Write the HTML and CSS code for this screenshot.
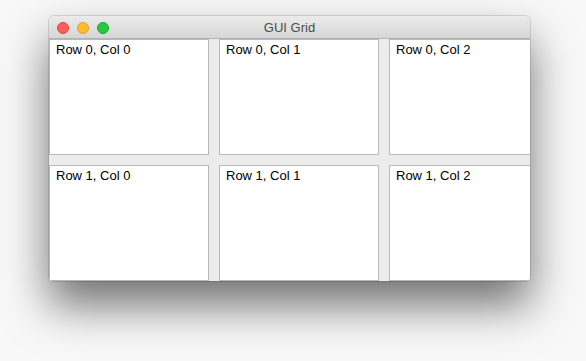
FILE: index.html
```html
<!DOCTYPE html>
<html lang="en">
<head>
    <meta charset="UTF-8">
    <title>GUI Grid</title>
    <link rel="stylesheet" href="styles.css">
</head>
<body>
    <!-- ventana -->
    <div class="window">
        <div class="titlebar">
            <div class="lights">
                <span class="light red"></span>
                <span class="light yellow"></span>
                <span class="light green"></span>
            </div>
            <div class="title">GUI Grid</div>
            <div></div>
        </div>
        <div class="grid">
            <div class="cell">Row 0, Col 0</div>
            <div class="cell">Row 0, Col 1</div>
            <div class="cell">Row 0, Col 2</div>
            <div class="cell">Row 1, Col 0</div>
            <div class="cell">Row 1, Col 1</div>
            <div class="cell">Row 1, Col 2</div>
        </div>
    </div>
</body>
</html>
```

FILE: styles.css
```css
html{
    height: 100%;
}

body{
    margin: 0;
    min-height: 100%;
    padding: 16px 0 0 49px;
    box-sizing: border-box;
    background-color: #f8f8f8;
    font-family: "Liberation Sans", Arial, sans-serif;
}

.window{
    width: 481px;
    height: 265px;
    border-radius: 5px 5px 4px 4px;
    overflow: hidden;
    background-color: #ececec;
    box-shadow: 0 0 0 1px rgba(0,0,0,0.12), 0 24px 45px rgba(0,0,0,0.55);
}

.titlebar{
    height: 22px;
    display: grid;
    grid-template-columns: 1fr auto 1fr;
    align-items: center;
    background: linear-gradient(#ebebeb, #d6d6d6);
    border-bottom: 1px solid #b4b4b4;
}

.lights{
    display: flex;
    gap: 8px;
    padding-left: 8px;
    padding-top: 1px;
}

.light{
    width: 10px;
    height: 10px;
    border-radius: 50%;
    border: 1px solid;
}

.red{ background-color: #fd5c5a; border-color: #e2463f; }
.yellow{ background-color: #febc2e; border-color: #e0a123; }
.green{ background-color: #28c840; border-color: #17ab2a; }

.title{
    font-size: 13px;
    line-height: 22px;
    padding-top: 1px;
    color: #4c4c4c;
}

.grid{
    display: grid;
    grid-template-columns: 160px 160px 160px;
    grid-template-rows: 116px 116px;
    gap: 10px;
}

.cell{
    background-color: #fff;
    border: 1px solid #b8b8b8;
    padding: 2px 6px 0;
    font-size: 13px;
    line-height: 15px;
    color: #000;
}
```
